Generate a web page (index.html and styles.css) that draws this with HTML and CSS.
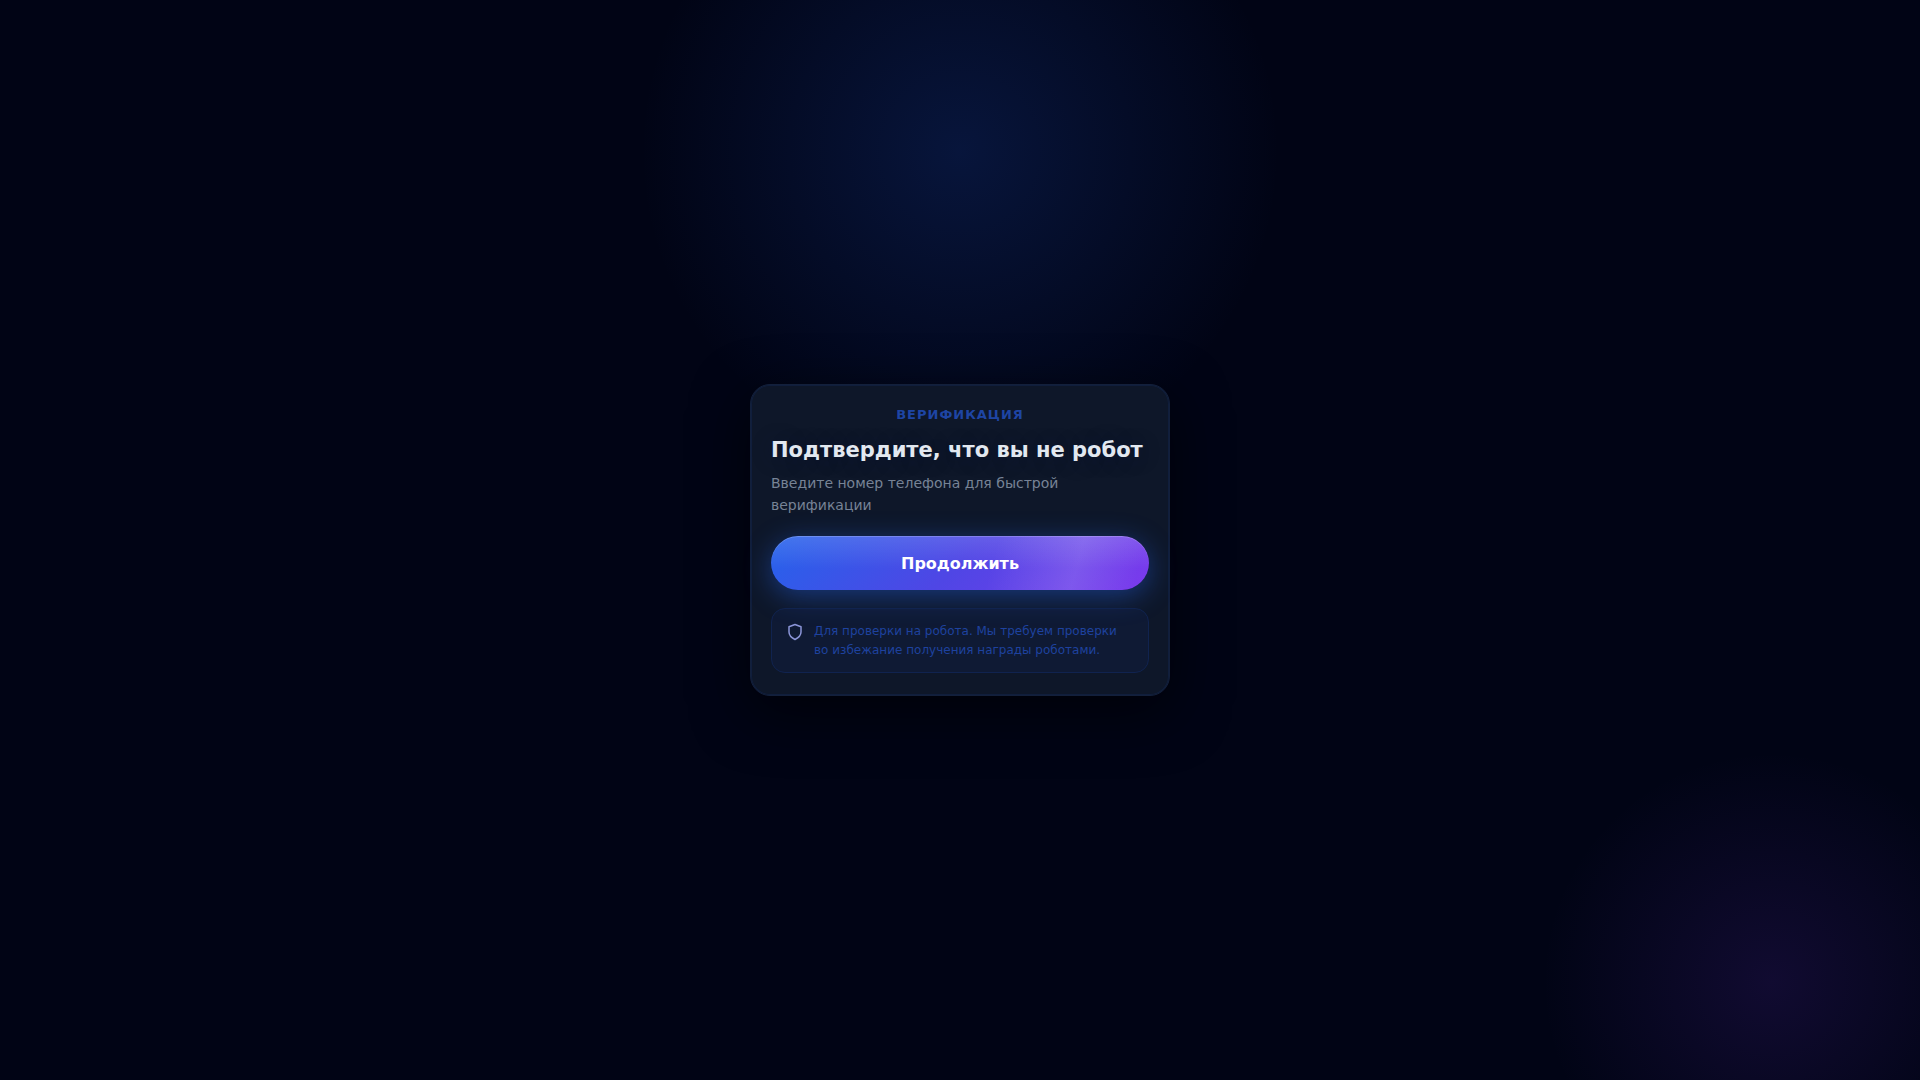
FILE: index.html
```html
<!DOCTYPE html>
<html lang="ru">
<head>
    <meta charset="UTF-8">
    <meta name="viewport" content="width=device-width, initial-scale=1.0">
    <title>Верификация</title>
    <link rel="stylesheet" href="styles.css">
</head>
<body>
    <main class="card">
        <div class="label">Верификация</div>
        <h1>Подтвердите, что вы не робот</h1>
        <p class="subtitle">Введите номер телефона для быстрой верификации</p>

        <button type="button" class="btn">Продолжить</button>

        <div class="note">
            <svg class="note-icon" viewBox="0 0 24 24" fill="none" stroke="currentColor" stroke-width="2" stroke-linejoin="round" aria-hidden="true">
                <path d="M12 2l8 3v7c0 6-8 10-8 10s-8-4-8-10V5l8-3z"/>
            </svg>
            <p>Для проверки на робота. Мы требуем проверки во избежание получения награды роботами.</p>
        </div>
    </main>
</body>
</html>
```

FILE: styles.css
```css
* {
    box-sizing: border-box;
    margin: 0;
    padding: 0;
}

body {
    min-height: 100vh;
    display: flex;
    align-items: center;
    justify-content: center;
    padding: 16px;
    font-family: 'DejaVu Sans', sans-serif;
    color: #e2e8f0;
    background:
        radial-gradient(circle 320px at 50% 14%, rgba(37, 99, 235, 0.18), transparent),
        radial-gradient(circle 230px at calc(100% - 148px) calc(100% - 98px), rgba(124, 58, 237, 0.13), transparent),
        #010415;
}

.card {
    width: 100%;
    max-width: 420px;
    padding: 20px 20px 22px;
    border: 1px solid #13203b;
    border-radius: 20px;
    background: #0e1729;
    box-shadow: 0 16px 56px rgba(0, 0, 0, 0.6), inset 0 0 0 1px rgba(37, 99, 235, 0.1);
}

.label {
    margin-bottom: 12px;
    font-size: 13px;
    line-height: 19px;
    font-weight: 700;
    letter-spacing: 1px;
    text-align: center;
    text-transform: uppercase;
    color: #1e45a4;
}

h1 {
    margin-bottom: 8px;
    font-size: 21px;
    line-height: 28px;
    white-space: nowrap;
    text-shadow: 0 2px 20px rgba(10, 20, 60, 0.4);
}

.subtitle {
    max-width: 320px;
    margin-bottom: 20px;
    font-size: 14px;
    line-height: 22px;
    color: #778396;
}

.btn {
    display: block;
    width: 100%;
    height: 54px;
    border: none;
    border-radius: 27px;
    font-family: inherit;
    font-size: 16px;
    font-weight: 700;
    color: #fff;
    cursor: pointer;
    background:
        linear-gradient(180deg, rgba(255, 255, 255, 0.13), transparent 60%),
        linear-gradient(105deg, transparent 58%, rgba(255, 255, 255, 0.13) 80%, transparent 96%),
        linear-gradient(135deg, #2563eb, #4f46e5 50%, #7c3aed);
    box-shadow: 0 6px 28px rgba(37, 99, 235, 0.45), inset 0 1px 0 rgba(255, 255, 255, 0.2);
}

.note {
    display: flex;
    gap: 10px;
    margin-top: 18px;
    padding: 13px 14px 12px;
    border: 1px solid #10234f;
    border-radius: 14px;
    background: rgba(20, 40, 100, 0.2);
    font-size: 12px;
    line-height: 19px;
    color: #1e429f;
}

.note-icon {
    flex: none;
    width: 18px;
    height: 18px;
    margin-top: 1px;
    color: #8b95d8;
}
```
